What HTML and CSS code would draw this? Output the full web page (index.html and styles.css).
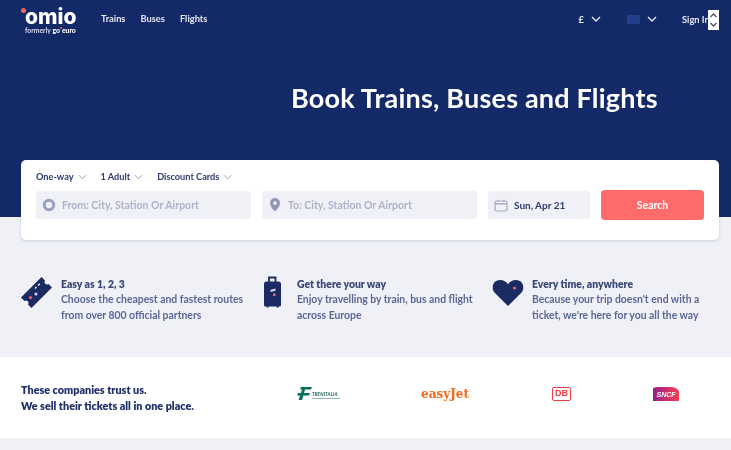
FILE: index.html
```html
<!DOCTYPE html>
<html lang="en">
<head>
<meta charset="utf-8">
<title>Omio</title>
<link rel="stylesheet" href="styles.css">
</head>
<body>
<header class="hero">
  <nav class="nav">
    <a class="logo">
      <span class="logo-word">omio</span>
      <span class="logo-sub">formerly <b>go<i class="logo-dot"></i>euro</b></span>
    </a>
    <ul class="nav-links">
      <li>Trains</li><li>Buses</li><li>Flights</li>
    </ul>
    <div class="nav-right">
      <span class="pick pick-cur">£<svg class="chev-nav" viewBox="0 0 10 6"><path d="M1 1l4 4 4-4"/></svg></span>
      <span class="pick pick-flag"><i class="flag"></i><svg class="chev-nav" viewBox="0 0 10 6"><path d="M1 1l4 4 4-4"/></svg></span>
      <span class="signin">Sign In</span>
    </div>
    <div class="spinner">
      <svg viewBox="0 0 10 20"><path d="M2 7l3-3 3 3M2 13l3 3 3-3"/></svg>
    </div>
  </nav>
  <h1 class="title">Book Trains, Buses and Flights</h1>
</header>

<section class="card">
  <div class="options">
    <span class="opt">One-way<svg class="chev" viewBox="0 0 10 6"><path d="M1 1l4 4 4-4"/></svg></span>
    <span class="opt">1 Adult<svg class="chev" viewBox="0 0 10 6"><path d="M1 1l4 4 4-4"/></svg></span>
    <span class="opt">Discount Cards<svg class="chev" viewBox="0 0 10 6"><path d="M1 1l4 4 4-4"/></svg></span>
  </div>
  <div class="fields">
    <div class="field field-from">
      <svg class="ficon" viewBox="0 0 14 14"><circle cx="7" cy="7" r="4.700" fill="none" stroke="#9aa0bf" stroke-width="3"/></svg>
      <span>From: City, Station Or Airport</span>
    </div>
    <div class="field field-to">
      <svg class="ficon" viewBox="0 0 12 14"><path fill="#9197b8" fill-rule="evenodd" d="M6 0a5 5 0 0 1 5 5c0 3.400-3.300 6.800-5 8.500C4.300 11.800 1 8.400 1 5a5 5 0 0 1 5-5zm0 3.300a1.800 1.800 0 1 0 0 3.600 1.800 1.800 0 0 0 0-3.600z"/></svg>
      <span>To: City, Station Or Airport</span>
    </div>
    <div class="field field-date">
      <svg class="ficon-cal" viewBox="0 0 14 13"><rect x="1" y="2" width="12" height="10" rx="1.500" fill="none" stroke="#a5aac6" stroke-width="1.200"/><path d="M1 4.800h12" stroke="#a5aac6" stroke-width="1.500"/><path d="M4 .8v2M10 .8v2" stroke="#a5aac6" stroke-width="1.200"/></svg>
      <span>Sun, Apr 21</span>
    </div>
    <button class="search">Search</button>
  </div>
</section>

<section class="benefits">
  <article class="benefit b1">
    <svg class="bicon" width="32" height="32" viewBox="0 0 32 32">
      <path fill="#1b2a63" d="M21.500 0l3.500 3.500a2.500 2.500 0 0 0 3.500 3.500L32 10.500 11.500 31 8 27.500A2.500 2.500 0 0 0 4.500 24L1 20.500z"/>
      <path d="M18 8.500l1.800-1.800M15 11.500l1.500-1.500" stroke="#fff" stroke-width="1.300"/>
      <circle cx="16" cy="17" r="1.600" fill="#cfd3e4"/>
      <circle cx="10.500" cy="20.500" r="1.600" fill="#f4635f"/>
    </svg>
    <div class="btext">
      <h3>Easy as 1, 2, 3</h3>
      <p>Choose the cheapest and fastest routes<br>from over 800 official partners</p>
    </div>
  </article>
  <article class="benefit b2">
    <svg class="bicon" width="19" height="32" viewBox="0 0 18 32">
      <path fill="none" stroke="#1b2a63" stroke-width="1.800" d="M5.500 6V1.500h6.500V6"/>
      <path fill="#1b2a63" d="M3 5.500h12a2.500 2.500 0 0 1 2.500 2.500v21a1.500 1.500 0 0 1-1.500 1.500h-1v1h-2v-1H5v1H3v-1H2A1.500 1.500 0 0 1 .5 29V8A2.500 2.500 0 0 1 3 5.500z"/>
      <path d="M7 15l5-1.500" stroke="#d5d8e6" stroke-width="2"/>
      <rect x="9.500" y="17.500" width="2.500" height="2.500" fill="#f4635f"/>
    </svg>
    <div class="btext">
      <h3>Get there your way</h3>
      <p>Enjoy travelling by train, bus and flight<br>across Europe</p>
    </div>
  </article>
  <article class="benefit b3">
    <svg class="bicon" width="32" height="28" viewBox="0 0 32 28">
      <path fill="#1b2a63" d="M16 27L2.500 13.500C-1 9.500.5 1 8 1c3.500 0 6.500 1.800 8 4.300C17.500 2.800 20.500 1 24 1c7.500 0 9 8.500 5.500 12.500z"/>
      <circle cx="22.500" cy="9" r="1.500" fill="#f4635f"/>
    </svg>
    <div class="btext">
      <h3>Every time, anywhere</h3>
      <p>Because your trip doesn't end with a<br>ticket, we're here for you all the way</p>
    </div>
  </article>
</section>

<section class="partners">
  <p class="trust">These companies trust us.<br>We sell their tickets all in one place.</p>
  <div class="logos">
    <div class="lg lg-tren">
      <svg width="15" height="13" viewBox="0 0 15 13"><path fill="#0c6f5e" d="M4 0h11l-1 2.500H8L7 6h6l-1 2.500H6.500L5 13H1.500L3 8.500H0L1 6h3L5 2.500H3z"/></svg>
      <span class="tren-words"><b>TRENITALIA</b><i></i></span>
    </div>
    <div class="lg lg-easy">easyJet</div>
    <div class="lg lg-db"><span>DB</span></div>
    <div class="lg lg-sncf"><span>SNCF</span></div>
  </div>
</section>
<div class="tail"></div>
</body>
</html>
```
FILE: styles.css
```css
* { box-sizing: border-box; }
html, body { margin: 0; padding: 0; }
body {
  width: 731px;
  height: 450px;
  overflow: hidden;
  background: #f0f1f6;
  font-family: "Lato", "Liberation Sans", sans-serif;
  color: #1b2a63;
  filter: blur(.35px);
}

.hero { height: 217px; background: #132968; color: #fff; }
.nav { position: relative; height: 38px; display: flex; align-items: flex-start; padding: 8px 0 0 21px; }
.logo { width: 80px; display: flex; flex-direction: column; position: relative; }
.logo::before { content: ""; position: absolute; left: 0; top: 0; width: 5px; height: 5px; border-radius: 50%; background: #f4635f; }
.logo-word { font-family: "Inter", sans-serif; font-size: 21px; font-weight: 800; line-height: 16px; padding: 1px 0 0 4px; letter-spacing: 0; height: 18px; }
.logo-sub { font-size: 6.800px; line-height: 9px; padding-left: 4px; color: #d7dbe9; white-space: nowrap; font-weight: 700; }
.logo-sub b { color: #fff; }
.logo-dot { display: inline-block; width: 2px; height: 2px; border-radius: 50%; background: #f4635f; vertical-align: 4px; }
.nav-links { display: flex; gap: 15px; list-style: none; margin: 5px 0 0; padding: 0; font-size: 9.300px; line-height: 12px; font-weight: 700; color: #e4e6f0; }
.nav-right { margin-left: auto; display: flex; align-items: center; height: 12px; margin-top: 5px; font-size: 9.300px; font-weight: 700; color: #e4e6f0; }
.pick { display: flex; align-items: center; gap: 7px; }
.pick-flag { margin-left: 26px; }
.flag { display: block; width: 13px; height: 9px; background: #213f8a; }
.chev-nav { width: 10px; height: 6px; fill: none; stroke: #e4e6f0; stroke-width: 1.400; }
.signin { margin-left: 25px; width: 49px; white-space: nowrap; }
.spinner { position: absolute; left: 708px; top: 10px; width: 11px; height: 20px; background: #fff; }
.spinner svg { display: block; width: 11px; height: 20px; fill: none; stroke: #4a5068; stroke-width: 1.300; }
.title { margin: 44px 0 0 291px; font-size: 27px; line-height: 32px; font-weight: 700; white-space: nowrap; letter-spacing: .2px; }

.card {
  margin: -57px 12px 0 21px;
  height: 80px;
  position: relative;
  background: #fff;
  border-radius: 5px;
  box-shadow: 0 1px 3px rgba(27, 42, 99, .18);
  padding: 10px 15px 0;
}
.options { display: flex; gap: 14px; height: 13px; align-items: center; font-size: 9.200px; font-weight: 700; color: #2d3a70; }
.opt { display: flex; align-items: center; gap: 4px; }
.chev { width: 9px; height: 6px; fill: none; stroke: #8f95b5; stroke-width: 1; }
.fields { display: flex; align-items: center; margin-top: 7px; height: 30px; }
.field { height: 28px; border-radius: 3px; background: #f0f1f6; display: flex; align-items: center; font-size: 10.500px; font-weight: 700; color: #aeb2ca; white-space: nowrap; }
.field-from { width: 215px; padding-left: 6px; gap: 6px; }
.field-to { width: 215px; margin-left: 11px; padding-left: 6px; gap: 6px; }
.field-date { width: 102px; margin-left: 11px; padding-left: 6px; gap: 6px; color: #2d3a70; font-size: 10px; }
.ficon { width: 14px; height: 14px; flex: none; }
.ficon-cal { width: 14px; height: 13px; flex: none; }
.search { width: 103px; height: 30px; margin-left: 11px; border: 0; border-radius: 4px; background: #ff6b6b; color: #fff; font: 700 10.500px "Lato", sans-serif; }

.benefits { height: 117px; position: relative; display: flex; padding: 37px 0 0 20px; }
.benefit { display: flex; }
.bicon { flex: none; }
.btext h3 { margin: 0; font-size: 10.400px; line-height: 15px; font-weight: 800; color: #3a4778; }
.btext p { margin: 0; font-size: 10.400px; line-height: 15.500px; font-weight: 700; color: #5b6797; white-space: nowrap; }
.b1 { width: 245px; gap: 9px; }
.b1 .bicon { margin-top: 0; }
.b2 { width: 229px; gap: 15px; margin-left: -2px; }
.b2 .bicon { margin-top: -1px; }
.b3 { gap: 8px; margin-left: 0; }
.b3 .bicon { margin-top: 2px; }

.partners { height: 81px; background: #fff; display: flex; align-items: center; padding-left: 21px; }
.trust { margin: 0; width: 271px; font-size: 10.800px; line-height: 16px; font-weight: 800; color: #1f2f6c; }
.logos { display: flex; align-items: center; padding-bottom: 8px; }
.lg { display: flex; align-items: center; height: 20px; }
.lg-tren { width: 124px; margin-left: 5px; gap: 0; }
.tren-words { display: flex; flex-direction: column; color: #1b5d56; margin-top: 4px; }
.tren-words b { font-size: 4.700px; line-height: 5px; font-style: italic; letter-spacing: .1px; }
.tren-words i { display: block; width: 28px; height: 1px; background: #8fb5ae; margin-top: 1px; }
.lg-easy { width: 131px; color: #f26a1c; font: 700 12px "DejaVu Serif", serif; }
.lg-db { width: 101px; }
.lg-db span { display: block; width: 19px; height: 14px; border: 1.500px solid #ee3d46; border-radius: 2px; color: #ee3d46; font: 700 9px/11px "Liberation Sans", sans-serif; text-align: center; }
.lg-sncf span { display: block; width: 26px; height: 14px; background: linear-gradient(90deg, #8f1f86, #e03460 70%, #ef3e4e); border-radius: 5px 9px 0 0 / 2px 5px 0 0; color: #fff; font: italic 700 7px/15px "Liberation Sans", sans-serif; text-align: center; }
.tail { height: 12px; }
```
